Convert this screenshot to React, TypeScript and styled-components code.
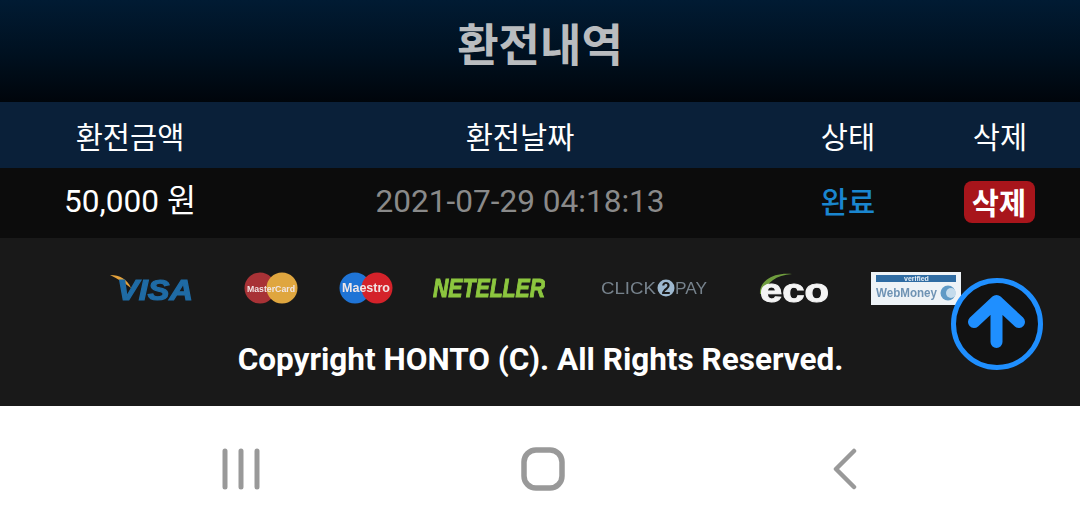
import React from 'react';
import styled, { createGlobalStyle } from 'styled-components';

const GlobalStyle = createGlobalStyle`
    html, body {
        margin: 0;
        padding: 0;
        background: #fff;
    }

    body {
        font-family: Roboto, "Noto Sans CJK KR", sans-serif;
    }
`;

const Page = styled.div`
    position: relative;
    width: 1080px;
    height: 531px;
    overflow: hidden;
    display: flex;
    flex-direction: column;
`;

const Header = styled.h1`
    margin: 0;
    height: 102px;
    flex: none;
    display: flex;
    align-items: center;
    justify-content: center;
    padding-bottom: 18px;
    box-sizing: border-box;
    background: linear-gradient(180deg, #011b33 0%, #00101f 55%, #00050b 100%);
    color: #b9bcbf;
    font-size: 45px;
    font-weight: 700;
    font-family: "Noto Sans CJK KR", sans-serif;
`;

const Row = styled.div<{ $head?: boolean }>`
    display: grid;
    grid-template-columns: 260px 520px 136px 164px;
    align-items: center;
    justify-items: center;
    flex: none;
    box-sizing: border-box;
    height: ${(p) => (p.$head ? '66px' : '70px')};
    padding-bottom: ${(p) => (p.$head ? '0' : '3px')};
    background: ${(p) => (p.$head ? '#0a2039' : '#0c0c0c')};
    color: #fff;
    font-size: 29.5px;
    font-family: "Noto Sans CJK KR", sans-serif;
`;

const Cell = styled.div<{ $color?: string; $weight?: number; $lift?: number; $nudge?: number }>`
    color: ${(p) => p.$color || '#fff'};
    font-weight: ${(p) => p.$weight || 400};
    line-height: 40px;
    white-space: nowrap;
    margin-bottom: ${(p) => p.$lift || 0}px;
    margin-left: ${(p) => p.$nudge || 0}px;
`;

const NumCell = styled(Cell)`
    font-family: Roboto, "Noto Sans CJK KR", sans-serif;
    font-size: 31.6px;
`;

const DeleteButton = styled.button`
    border: none;
    padding: 0 0 2px;
    width: 71px;
    height: 42px;
    margin-left: 2px;
    border-radius: 8px;
    background: #a8151b;
    color: #fff;
    font-family: "Noto Sans CJK KR", sans-serif;
    font-size: 29.5px;
    font-weight: 700;
    line-height: 40px;
`;

const Footer = styled.footer`
    flex: none;
    height: 168px;
    box-sizing: border-box;
    background: #191919;
    padding-top: 30px;
    display: flex;
    flex-direction: column;
    align-items: center;
`;

const Logos = styled.div`
    display: flex;
    align-items: center;
    align-self: flex-start;
    height: 40px;
    margin-left: 110px;
`;

const Logo = styled.div<{ $gap?: number }>`
    display: flex;
    margin-left: ${(p) => p.$gap || 0}px;
    filter: blur(0.7px);
`;

const Copyright = styled.div`
    margin-top: 32px;
    margin-left: 1px;
    color: #fff;
    font-size: 31.5px;
    font-weight: 700;
    line-height: 40px;
    white-space: nowrap;
`;

const TopButton = styled.button`
    position: absolute;
    left: 951px;
    top: 278px;
    width: 92px;
    height: 92px;
    padding: 0;
    box-sizing: border-box;
    border: 5px solid #1f8fff;
    border-radius: 50%;
    background: #121212;
    display: flex;
    align-items: center;
    justify-content: center;
`;

const NavBar = styled.nav`
    flex: 1;
    background: #fff;
    display: grid;
    grid-template-columns: 1fr 1fr 1fr;
    align-items: center;
    justify-items: center;
    padding: 0 84px 0 90px;
`;

const NavIcon = styled.svg`
    display: block;
    fill: none;
    stroke: #999;
    stroke-linecap: round;
    stroke-linejoin: round;
`;

const VisaLogo = () => (
    <svg width="84" height="40" viewBox="0 -4 84 40">
        <path d="M0 3 C10 3 17 7 21 16 C15 11 8 7 0 3 Z" fill="#e5a23b" />
        <text x="7" y="28" fontFamily="Liberation Sans" fontStyle="italic" fontWeight="700" fontSize="29" fill="#1f6ba5" stroke="#1f6ba5" strokeWidth="1.2" textLength="76" lengthAdjust="spacingAndGlyphs">VISA</text>
    </svg>
);

const CardLogo = ({ left, right, label, size }: { left: string; right: string; label: string; size: number }) => (
    <svg width="54" height="32" viewBox="0 0 54 32">
        <circle cx="16" cy="16" r="15.5" fill={left} />
        <circle cx="38" cy="16" r="15.5" fill={right} />
        <text x="3" y="20" fontFamily="Liberation Sans" fontWeight="700" fontSize={size} fill="#f1e6e6" textLength="48" lengthAdjust="spacingAndGlyphs">{label}</text>
    </svg>
);

const NetellerLogo = () => (
    <svg width="113" height="36" viewBox="0 -6 113 36">
        <text transform="translate(1 21) scale(0.85 1)" fontFamily="Liberation Sans" fontStyle="italic" fontWeight="700" fontSize="25" fill="#8cc63f" stroke="#8cc63f" strokeWidth="1">NETELLER</text>
    </svg>
);

const ClickPayLogo = () => (
    <svg width="107" height="24" viewBox="0 0 107 24">
        <text x="0" y="18" fontFamily="Liberation Sans" fontSize="17" fill="#76828c" textLength="55" lengthAdjust="spacingAndGlyphs">CLICK</text>
        <circle cx="65" cy="12" r="8.5" fill="#9db8cf" />
        <text x="60.5" y="18" fontFamily="Liberation Sans" fontWeight="700" fontSize="16" fill="#191919">2</text>
        <text x="74" y="18" fontFamily="Liberation Sans" fontSize="17" fill="#76828c" textLength="32" lengthAdjust="spacingAndGlyphs">PAY</text>
    </svg>
);

const EcoLogo = () => (
    <svg width="72" height="44" viewBox="0 -6 72 44">
        <path d="M2 22 C1 10 14 0 34 2 C18 3 8 11 6 22 Z" fill="#6f9d3e" />
        <text x="2" y="30" fontFamily="Liberation Sans" fontWeight="700" fontSize="33" fill="#f4f4f4" stroke="#f4f4f4" strokeWidth="1" textLength="69" lengthAdjust="spacingAndGlyphs">eco</text>
    </svg>
);

const WebMoneyLogo = () => (
    <svg width="90" height="33" viewBox="0 0 90 33">
        <rect x="0" y="0" width="90" height="33" fill="#eef3f7" />
        <rect x="5" y="3" width="80" height="7" fill="#2f6ca3" />
        <text x="33" y="9" fontFamily="Liberation Sans" fontWeight="700" fontSize="7" fill="#e4edf5">verified</text>
        <text x="5" y="25" fontFamily="Liberation Sans" fontWeight="700" fontSize="12" fill="#6f93b4" textLength="61" lengthAdjust="spacingAndGlyphs">WebMoney</text>
        <circle cx="77" cy="21" r="7.5" fill="#5f9ac6" />
        <circle cx="80" cy="21" r="5" fill="#c4dbec" />
    </svg>
);

export default function App() {
    return (
        <Page>
            <GlobalStyle />
            <Header>환전내역</Header>
            <Row $head>
                <Cell>환전금액</Cell>
                <Cell>환전날짜</Cell>
                <Cell>상태</Cell>
                <Cell $nudge={4}>삭제</Cell>
            </Row>
            <Row>
                <NumCell>50,000 원</NumCell>
                <NumCell $color="#8a8a8a">2021-07-29 04:18:13</NumCell>
                <Cell $color="#1a86cf" $weight={500} $lift={3}>완료</Cell>
                <DeleteButton>삭제</DeleteButton>
            </Row>
            <Footer>
                <Logos>
                    <Logo><VisaLogo /></Logo>
                    <Logo $gap={50}><CardLogo left="#a83236" right="#dfa63f" label="MasterCard" size={9} /></Logo>
                    <Logo $gap={41}><CardLogo left="#1f74d6" right="#d4222a" label="Maestro" size={12} /></Logo>
                    <Logo $gap={39}><NetellerLogo /></Logo>
                    <Logo $gap={56}><ClickPayLogo /></Logo>
                    <Logo $gap={50}><EcoLogo /></Logo>
                    <Logo $gap={41}><WebMoneyLogo /></Logo>
                </Logos>
                <Copyright>Copyright HONTO (C). All Rights Reserved.</Copyright>
            </Footer>
            <TopButton aria-label="top">
                <svg width="60" height="60" viewBox="0 0 60 60">
                    <path d="M29.5 48 V10 M7 28 L29.5 7 L52 28" fill="none" stroke="#1f8fff" strokeWidth="12" strokeLinecap="round" strokeLinejoin="round" />
                </svg>
            </TopButton>
            <NavBar>
                <NavIcon width="40" height="42" viewBox="0 0 40 42" strokeWidth="5">
                    <path d="M4 3 V39 M20 3 V39 M36 3 V39" />
                </NavIcon>
                <NavIcon width="44" height="44" viewBox="0 0 44 44" strokeWidth="5.5">
                    <rect x="3" y="3" width="38" height="38" rx="12" />
                </NavIcon>
                <NavIcon width="26" height="42" viewBox="0 0 26 42" strokeWidth="4.5">
                    <path d="M22 3 L4 21 L22 39" />
                </NavIcon>
            </NavBar>
        </Page>
    );
}
